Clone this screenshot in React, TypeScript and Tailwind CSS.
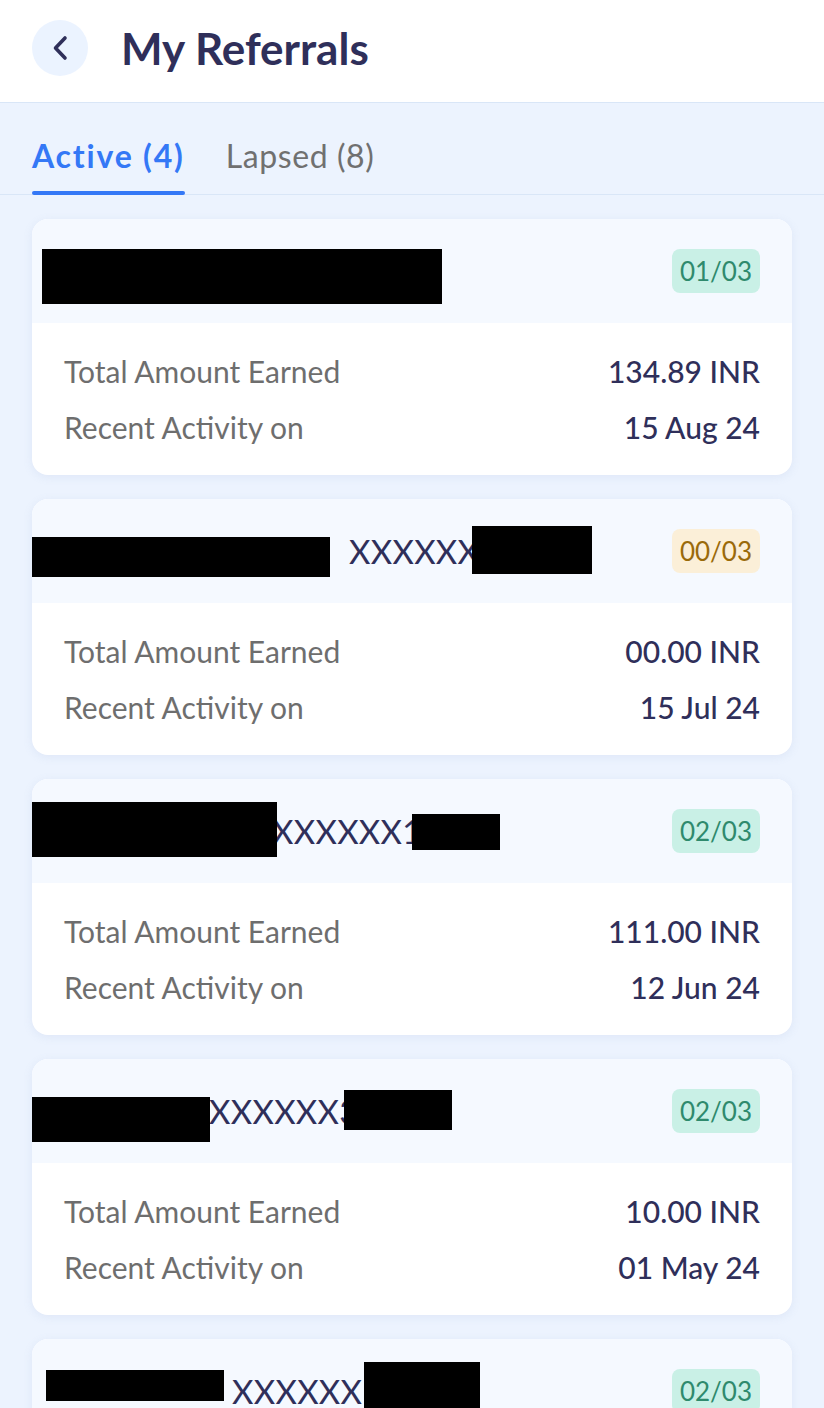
type Mask = { left: number; top: number; width: number; height: number };

type Referral = {
  id: number;
  text: string;
  textLeft: number;
  masks: Mask[];
  progress: string;
  tone: "green" | "amber";
  earned: string;
  activity: string;
};

const REFERRALS: Referral[] = [
  {
    id: 1,
    text: "",
    textLeft: 0,
    masks: [{ left: 10, top: 30, width: 400, height: 55 }],
    progress: "01/03",
    tone: "green",
    earned: "134.89 INR",
    activity: "15 Aug 24",
  },
  {
    id: 2,
    text: "XXXXXX",
    textLeft: 317,
    masks: [
      { left: -1, top: 38, width: 299, height: 40 },
      { left: 440, top: 27, width: 120, height: 48 },
    ],
    progress: "00/03",
    tone: "amber",
    earned: "00.00 INR",
    activity: "15 Jul 24",
  },
  {
    id: 3,
    text: "XXXXXX1",
    textLeft: 240,
    masks: [
      { left: -1, top: 23, width: 246, height: 55 },
      { left: 380, top: 35, width: 88, height: 36 },
    ],
    progress: "02/03",
    tone: "green",
    earned: "111.00 INR",
    activity: "12 Jun 24",
  },
  {
    id: 4,
    text: "XXXXXX3",
    textLeft: 177,
    masks: [
      { left: -1, top: 38, width: 179, height: 45 },
      { left: 312, top: 31, width: 108, height: 40 },
    ],
    progress: "02/03",
    tone: "green",
    earned: "10.00 INR",
    activity: "01 May 24",
  },
  {
    id: 5,
    text: "XXXXXX",
    textLeft: 200,
    masks: [
      { left: 14, top: 31, width: 178, height: 31 },
      { left: 332, top: 23, width: 116, height: 50 },
    ],
    progress: "02/03",
    tone: "green",
    earned: "10.00 INR",
    activity: "01 Apr 24",
  },
];

function ReferralCard({ item }: { item: Referral }) {
  return (
    <div className="overflow-hidden rounded-2xl bg-white shadow-[0_2px_10px_rgba(120,150,200,0.12)]">
      <div className="relative flex h-[104px] items-center justify-between bg-[#f5f9ff] pr-8">
        <span
          className="text-[33px] leading-none tracking-[0.3px] text-[#2f2f5a]"
          style={{ paddingLeft: item.textLeft }}
        >
          {item.text}
        </span>
        {item.masks.map((mask, i) => (
          <span
            key={i}
            className="absolute bg-black"
            style={{ left: mask.left, top: mask.top, width: mask.width, height: mask.height }}
          />
        ))}
        <span
          className={
            item.tone === "green"
              ? "rounded-lg bg-[#c9f0e6] px-[8px] py-[9px] text-[26px] leading-[26px] text-[#2f8a6d]"
              : "rounded-lg bg-[#fbefd8] px-[8px] py-[9px] text-[26px] leading-[26px] text-[#9a6a0a]"
          }
        >
          {item.progress}
        </span>
      </div>
      <div className="flex flex-col gap-5 px-8 pb-[30px] pt-[30px] text-[30px] leading-[36px]">
        <div className="flex items-center justify-between">
          <span className="text-[#6e6e6e]">Total Amount Earned</span>
          <span className="font-medium text-[#2f2f5a]">{item.earned}</span>
        </div>
        <div className="flex items-center justify-between">
          <span className="text-[#6e6e6e]">Recent Activity on</span>
          <span className="font-medium text-[#2f2f5a]">{item.activity}</span>
        </div>
      </div>
    </div>
  );
}

export default function App() {
  return (
    <div className="h-[1408px] overflow-hidden bg-[#ecf3fe] font-['Lato','Liberation_Sans',sans-serif]">
      <header className="flex h-[103px] items-center gap-[33px] border-b border-[#d9e6f7] bg-white pl-8">
        <button
          type="button"
          aria-label="Back"
          className="-mt-[7px] flex h-14 w-14 items-center justify-center rounded-full bg-[#ebf3ff] text-[#2f2f5a]"
        >
          <svg width="16" height="26" viewBox="0 0 16 26" fill="none" aria-hidden="true">
            <path
              d="M13 3 L3.5 13 L13 23"
              stroke="currentColor"
              strokeWidth="3.6"
              strokeLinecap="round"
              strokeLinejoin="round"
            />
          </svg>
        </button>
        <h1 className="-mt-[7px] text-[44px] font-bold leading-none text-[#2f2f5a]">My Referrals</h1>
      </header>

      <nav className="flex h-[92px] items-end gap-[41px] border-b border-[#d9e6f7] px-8">
        <button
          type="button"
          className="relative pb-[22px] text-[32px] font-bold leading-none tracking-[1.8px] text-[#3478f6]"
        >
          Active (4)
          <span className="absolute bottom-[-1px] left-0 h-[4px] w-full rounded-full bg-[#3478f6]" />
        </button>
        <button type="button" className="pb-[22px] text-[32px] leading-none tracking-[0.6px] text-[#707070]">
          Lapsed (8)
        </button>
      </nav>

      <div className="flex flex-col gap-6 px-8 pt-6">
        {REFERRALS.map((item) => (
          <ReferralCard key={item.id} item={item} />
        ))}
      </div>
    </div>
  );
}
